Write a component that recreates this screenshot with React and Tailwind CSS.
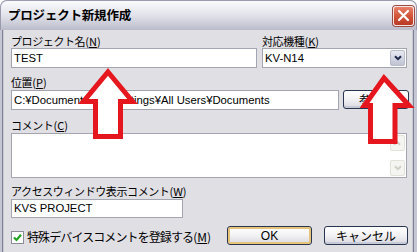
import React from "react";

const jp = { fontFamily: "'Noto Sans CJK JP', 'Liberation Sans', sans-serif" };
const lat = { fontFamily: "'Liberation Sans', 'Noto Sans CJK JP', sans-serif" };

function Label({ children, className = "" }) {
  return (
    <div
      className={"h-[14px] leading-[14px] text-[11px] text-black tracking-[-0.4px] whitespace-nowrap " + className}
      style={jp}
    >
      {children}
    </div>
  );
}

function Key({ k }) {
  return (
    <span className="tracking-[0px]">
      (<span className="underline underline-offset-1">{k}</span>)
    </span>
  );
}

function Input({ value, className = "" }) {
  return (
    <div
      className={
        "bg-white border border-[#a3a6b0] flex items-center pl-[2px] text-[11.3px] text-black whitespace-nowrap overflow-hidden " +
        className
      }
      style={lat}
    >
      {value}
    </div>
  );
}

function XPButton({ children, def = false, className = "" }) {
  return (
    <div
      className={
        "rounded-[3px] border border-[#2a3550] bg-linear-to-b from-[#ffffff] via-[#f2f2f4] to-[#d8d8e0] flex items-center justify-center text-[12px] text-black " +
        (def ? "shadow-[inset_0_0_0_2px_#e6c57a] " : "shadow-[inset_0_-2px_0_#c8c9d6] ") +
        className
      }
      style={jp}
    >
      {children}
    </div>
  );
}

function Chevron({ color = "#1e2a4a", w = 8 }) {
  return (
    <svg width={w} height="6" viewBox="0 0 8 6">
      <path d="M1 1.2 L4 4.2 L7 1.2" fill="none" stroke={color} strokeWidth="2" />
    </svg>
  );
}

export default function App() {
  return (
    <div className="relative w-[417px] h-[252px] overflow-hidden bg-white">
      <div className="w-[417px] h-[252px] flex flex-col rounded-t-[7px] bg-[#c4c6d3]">
        {/* Title bar */}
        <div className="h-[30px] shrink-0 rounded-t-[7px] border border-b-0 border-[#9a9cae] bg-linear-to-b from-[#fbfbfd] via-[#e1e2ea] to-[#babcca] flex items-center pl-[7px] pr-[2px]">
          <div className="flex-1 text-[12.5px] font-bold text-black tracking-[-0.2px]" style={jp}>
            プロジェクト新規作成
          </div>
          <div className="w-[21px] h-[20px] rounded-[3px] border border-[#f4e6e2] bg-linear-to-b from-[#e8806a] via-[#d45438] to-[#b83a26] flex items-center justify-center shadow-[0_0_0_1px_#9a4a40]">
            <svg width="13" height="13" viewBox="0 0 13 13">
              <path d="M2 2 L11 11 M11 2 L2 11" stroke="#ffffff" strokeWidth="2.2" strokeLinecap="round" />
            </svg>
          </div>
        </div>

        {/* Body frame */}
        <div className="flex-1 flex pl-[2px] pr-[3px] bg-[#c4c6d3]">
          <div className="flex-1 border-l border-r border-[#7f8192] bg-[#c8cad6] pl-[1px] pr-[1px] flex">
            <div className="flex-1 bg-[#e0dfe4] flex flex-col pl-[7px] pt-[4px]">
              {/* Row 1 labels + inputs */}
              <div className="flex gap-[5px]">
                <div className="w-[246px] flex flex-col">
                  <Label>
                    プロジェクト名<Key k="N" />
                  </Label>
                  <Input value="TEST" className="h-[20px]" />
                </div>
                <div className="w-[145px] flex flex-col">
                  <Label>
                    対応機種<Key k="K" />
                  </Label>
                  <div className="h-[20px] bg-white border border-[#a3a6b0] flex items-center pl-[2px] pr-[1px]">
                    <div className="flex-1 text-[11.3px] text-black" style={lat}>
                      KV-N14
                    </div>
                    <div className="w-[15px] h-[16px] rounded-[2px] border border-[#b8bccb] bg-linear-to-b from-[#e8eaf2] to-[#bfc3d3] flex items-center justify-center">
                      <Chevron />
                    </div>
                  </div>
                </div>
              </div>

              {/* Row 2 */}
              <Label className="mt-[7px]">
                位置<Key k="P" />
              </Label>
              <div className="mt-[1px] flex gap-[4px]">
                <Input value="C:¥Documents and Settings¥All Users¥Documents" className="w-[328px] h-[20px]" />
                <XPButton className="w-[66px] h-[19px]">参照...</XPButton>
              </div>

              {/* Comment */}
              <Label className="mt-[8px]">
                コメント<Key k="C" />
              </Label>
              <div className="mt-[1px] w-[396px] h-[45px] bg-white border border-[#a3a6b0] flex justify-end p-[1px]">
                <div className="w-[15px] flex flex-col justify-between">
                  <div className="h-[16px] rounded-[2px] border border-[#e2e2da] bg-[#f4f4f0] flex items-center justify-center rotate-180">
                    <Chevron color="#d0d0c8" />
                  </div>
                  <div className="h-[16px] rounded-[2px] border border-[#e2e2da] bg-[#f4f4f0] flex items-center justify-center">
                    <Chevron color="#d0d0c8" />
                  </div>
                </div>
              </div>

              {/* Access window comment */}
              <Label className="mt-[6px]">
                アクセスウィンドウ表示コメント<Key k="W" />
              </Label>
              <Input value="KVS PROJECT" className="mt-[1px] w-[172px] h-[19px]" />

              {/* Bottom row */}
              <div className="mt-[8px] flex items-center h-[19px]">
                <div className="w-[13px] h-[13px] mt-[3px] bg-white border border-[#8b8e99] flex items-center justify-center">
                  <svg width="9" height="9" viewBox="0 0 9 9">
                    <path d="M1 4.5 L3.5 7 L8 1.8" fill="none" stroke="#22a322" strokeWidth="2.2" />
                  </svg>
                </div>
                <div className="ml-[3px] mt-[3px] text-[12px] text-black tracking-[-0.9px] whitespace-nowrap" style={jp}>
                  特殊デバイスコメントを登録する<Key k="M" />
                </div>
                <div className="flex-1" />
                <XPButton def className="w-[85px] h-[19px]">
                  <span style={lat}>OK</span>
                </XPButton>
                <XPButton className="ml-[12px] w-[84px] h-[19px] mr-[0px]">キャンセル</XPButton>
                <div className="w-[4px]" />
              </div>
            </div>
          </div>
        </div>
      </div>

      {/* Red arrows overlay */}
      <svg className="absolute left-0 top-0 pointer-events-none" width="417" height="252" viewBox="0 0 417 252">
        <path
          d="M108 72 L132.5 101.5 L120.5 101.5 L120.5 136.5 L95.5 136.5 L95.5 101.5 L83.5 101.5 Z"
          fill="#ffffff"
          stroke="#e5161d"
          strokeWidth="5"
          strokeLinejoin="miter"
        />
        <path
          d="M384 78 L409 105.5 L395 105.5 L395 141.5 L370.5 141.5 L370.5 105.5 L364.5 105.5 Z"
          fill="#ffffff"
          stroke="#e5161d"
          strokeWidth="5"
          strokeLinejoin="miter"
        />
      </svg>
    </div>
  );
}
